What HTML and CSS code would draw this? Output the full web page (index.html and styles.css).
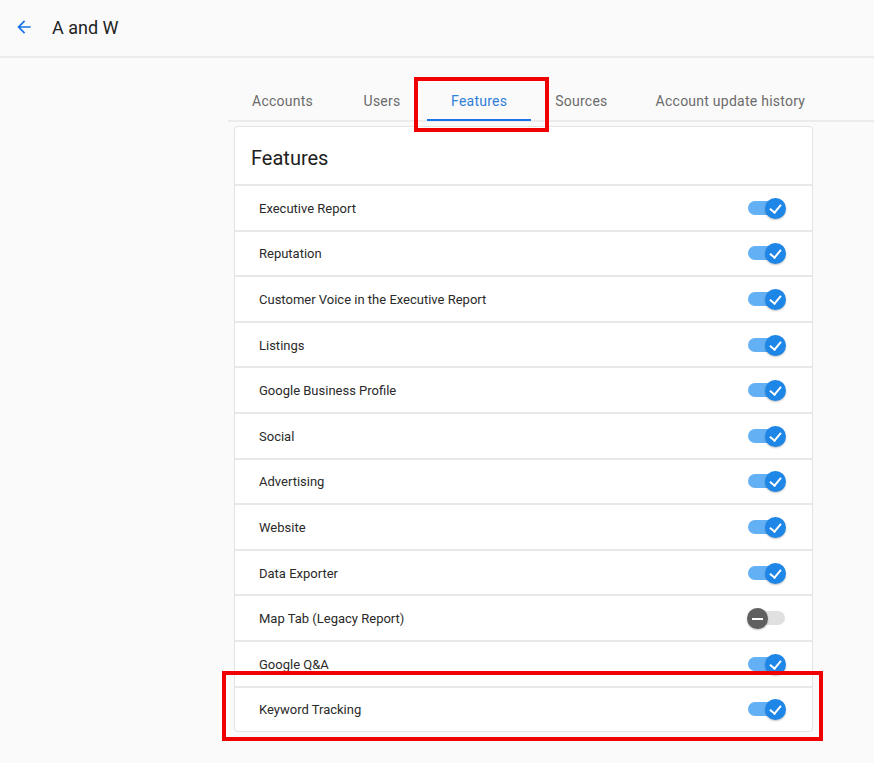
FILE: index.html
```html
<!DOCTYPE html>
<html>
<head>
<meta charset="utf-8">
<link rel="stylesheet" href="styles.css">
</head>
<body>
<header class="topbar">
  <svg class="back" width="20" height="20" viewBox="0 0 24 24"><path d="M20 11H7.83l5.59-5.59L12 4l-8 8 8 8 1.41-1.41L7.83 13H20v-2z" fill="#1a73e8"/></svg>
  <h1 class="title">A and W</h1>
</header>
<main class="main">
  <nav class="tabs">
    <div class="tab">Accounts</div>
    <div class="tab">Users</div>
    <div class="tab active">Features</div>
    <div class="tab">Sources</div>
    <div class="tab">Account update history</div>
  </nav>
  <section class="card">
    <div class="card-head">Features</div>
    <div class="row"><span>Executive Report</span><span class="tg on"><span class="knob"></span></span></div>
    <div class="row"><span>Reputation</span><span class="tg on"><span class="knob"></span></span></div>
    <div class="row"><span>Customer Voice in the Executive Report</span><span class="tg on"><span class="knob"></span></span></div>
    <div class="row"><span>Listings</span><span class="tg on"><span class="knob"></span></span></div>
    <div class="row"><span>Google Business Profile</span><span class="tg on"><span class="knob"></span></span></div>
    <div class="row"><span>Social</span><span class="tg on"><span class="knob"></span></span></div>
    <div class="row"><span>Advertising</span><span class="tg on"><span class="knob"></span></span></div>
    <div class="row"><span>Website</span><span class="tg on"><span class="knob"></span></span></div>
    <div class="row"><span>Data Exporter</span><span class="tg on"><span class="knob"></span></span></div>
    <div class="row"><span>Map Tab (Legacy Report)</span><span class="tg off"><span class="knob"></span></span></div>
    <div class="row"><span>Google Q&amp;A</span><span class="tg on"><span class="knob"></span></span></div>
    <div class="row"><span>Keyword Tracking</span><span class="tg on"><span class="knob"></span></span></div>
  </section>
</main>
<div class="hl hl-tab"></div>
<div class="hl hl-row"></div>
</body>
</html>
```
FILE: styles.css
```css
* { box-sizing: border-box; }
body {
  margin: 0;
  background: #fafafa;
  font-family: Roboto, "Liberation Sans", sans-serif;
  color: #212121;
  height: 763px;
  overflow: hidden;
  position: relative;
}
.topbar {
  height: 58px;
  border-bottom: 2px solid #ececec;
  display: flex;
  align-items: center;
  padding-left: 14px;
}
.back { display: block; margin-top: -2px; }
.title {
  margin: 0 0 0 18px;
  font-size: 18px;
  font-weight: 400;
  color: #1f1f1f;
  margin-top: -2px;
}
.main { padding-left: 228px; }
.tabs {
  display: flex;
  margin-top: 24px;
  height: 40px;
  border-bottom: 2px solid #ececec;
}
.tab {
  min-width: 90px;
  padding: 1px 24px 0;
  text-align: center;
  font-size: 14px;
  color: #6b6b6b;
  line-height: 37px;
  position: relative;
  letter-spacing: 0.25px;
}
.tab.active { color: #2f7fd8; }
.tab.active::after {
  content: "";
  position: absolute;
  left: 0; right: 0; bottom: -1px;
  height: 2px;
  background: #1a73e8;
}
.card {
  margin: 4px 0 0 6px;
  width: 579px;
  background: #fff;
  border: 1px solid #e3e3e3;
  border-radius: 4px;
}
.card-head {
  height: 57px;
  padding: 5px 0 0 16px;
  display: flex;
  align-items: center;
  font-size: 20px;
  color: #202020;
}
.row {
  height: 45.6px;
  border-top: 2px solid #e8e8e8;
  display: flex;
  align-items: center;
  justify-content: space-between;
  padding: 1px 27px 0 24px;
  font-size: 13px;
  color: #2a2a2a;
}
.tg {
  position: relative;
  width: 37px;
  height: 14px;
  border-radius: 7px;
  margin-top: -1px;
}
.tg.on { background: #64b0f4; }
.tg.off { background: #e0e0e0; }
.knob {
  position: absolute;
  top: -3px;
  width: 21px;
  height: 21px;
  border-radius: 50%;
  box-shadow: 0 1px 2px rgba(0,0,0,0.25);
}
.tg.on .knob { right: -1px; background: #1e86e6; }
.tg.off .knob { left: -1px; background: #5f5f5f; }
.tg.on .knob::after {
  content: "";
  position: absolute;
  left: 7px; top: 4px;
  width: 5px; height: 9px;
  border-right: 2px solid #fff;
  border-bottom: 2px solid #fff;
  transform: rotate(40deg);
}
.tg.off .knob::after {
  content: "";
  position: absolute;
  left: 5px; top: 9.5px;
  width: 11px; height: 2px;
  background: #fff;
}
.hl {
  position: absolute;
  border: 4px solid #f00000;
  pointer-events: none;
}
.hl-tab { left: 414px; top: 77px; width: 135px; height: 55px; }
.hl-row { left: 222px; top: 671px; width: 601px; height: 70px; }
```
